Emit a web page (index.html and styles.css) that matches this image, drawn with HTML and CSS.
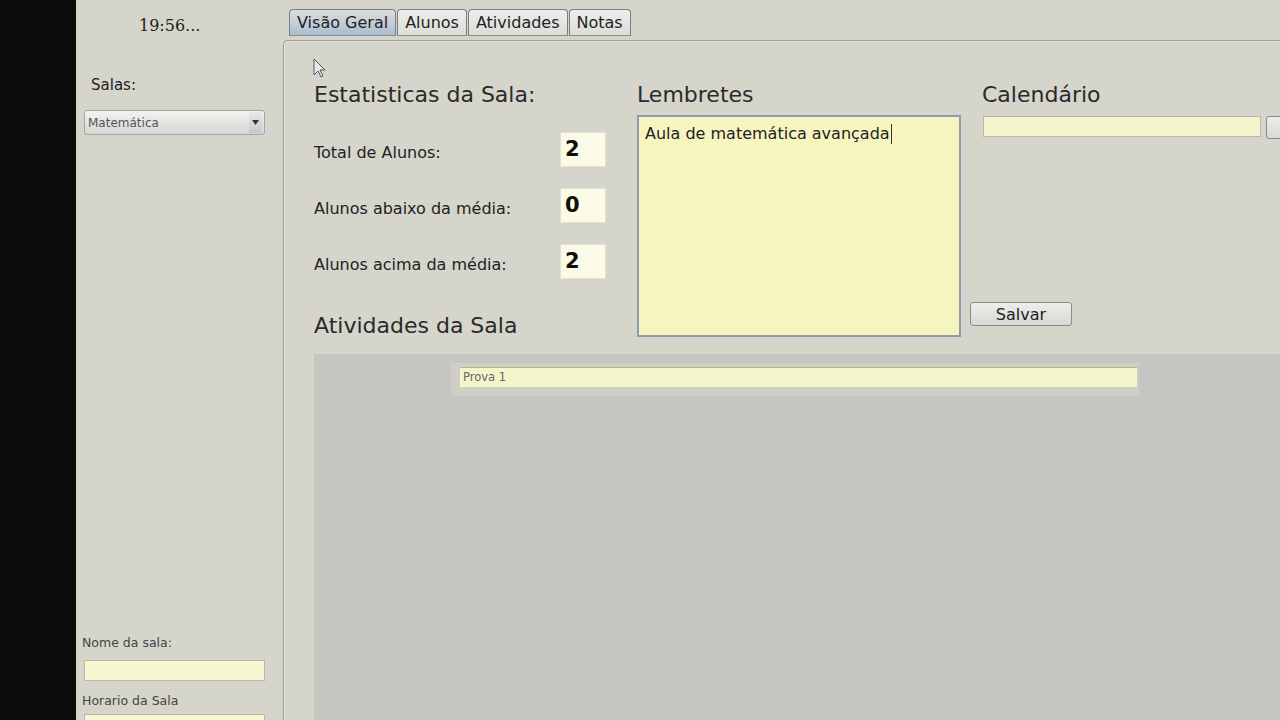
FILE: index.html
```html
<!DOCTYPE html>
<html lang="pt">
<head>
<meta charset="utf-8">
<title>Sala</title>
<link rel="stylesheet" href="styles.css">
</head>
<body>
<div class="blackbar"></div>
<aside class="sidebar">
  <div class="clock">19:56...</div>
  <div class="salas-label">Salas:</div>
  <div class="combo">
    <span class="combo-text">Matemática</span>
    <span class="combo-btn"><svg width="7" height="5" viewBox="0 0 7 5"><path d="M0 0h7L3.5 5z" fill="#333"/></svg></span>
  </div>
  <div class="field-label first">Nome da sala:</div>
  <div class="field-input"></div>
  <div class="field-label">Horario da Sala</div>
  <div class="field-input last"></div>
</aside>
<main class="main">
  <nav class="tabs">
    <div class="tab active">Visão Geral</div>
    <div class="tab">Alunos</div>
    <div class="tab">Atividades</div>
    <div class="tab">Notas</div>
  </nav>
  <section class="panel">
    <svg class="cursor" width="14" height="21" viewBox="0 0 14 21"><path d="M1 1v16l4-4 3 6 2-1-3-6h5z" fill="#e8e8ec" stroke="#555" stroke-width="1"/></svg>
    <div class="top">
      <div class="col stats-col">
        <h2 class="heading">Estatisticas da Sala:</h2>
        <div class="stats">
          <div class="stat-row"><span class="stat-label">Total de Alunos:</span><span class="stat-box">2</span></div>
          <div class="stat-row"><span class="stat-label">Alunos abaixo da média:</span><span class="stat-box">0</span></div>
          <div class="stat-row"><span class="stat-label">Alunos acima da média:</span><span class="stat-box">2</span></div>
        </div>
        <h2 class="heading activities-heading">Atividades da Sala</h2>
      </div>
      <div class="col notes-col">
        <h2 class="heading">Lembretes</h2>
        <div class="notes"><span class="notes-text">Aula de matemática avançada</span><span class="caret"></span></div>
      </div>
      <div class="col cal-col">
        <h2 class="heading cal-heading">Calendário</h2>
        <div class="cal-row">
          <div class="cal-input"></div>
          <div class="cal-btn"></div>
        </div>
        <button class="save">Salvar</button>
      </div>
    </div>
    <div class="activities">
      <div class="act-strip">
        <div class="act-input">Prova 1</div>
      </div>
    </div>
  </section>
</main>
</body>
</html>
```
FILE: styles.css
```css
html, body {
  margin: 0;
  padding: 0;
}
body {
  width: 1280px;
  height: 720px;
  overflow: hidden;
  display: flex;
  background: #d5d5cc;
  font-family: "DejaVu Sans", "Noto Sans", sans-serif;
  color: #222;
}
.blackbar {
  width: 76px;
  flex: none;
  background: #0b0b0b;
}
.sidebar {
  width: 201px;
  flex: none;
  display: flex;
  flex-direction: column;
  padding-left: 6px;
}
.clock {
  font-family: "DejaVu Serif", serif;
  font-size: 16px;
  line-height: 20px;
  padding-top: 16px;
  margin-left: 57px;
  color: #222;
}
.salas-label {
  font-size: 15px;
  line-height: 18px;
  margin-top: 40px;
  margin-left: 9px;
  color: #222;
}
.combo {
  margin-top: 16px;
  margin-left: 2px;
  width: 181px;
  height: 25px;
  box-sizing: border-box;
  border: 1px solid #a4a4a8;
  border-radius: 3px;
  background: linear-gradient(#f2f2f0, #d6d6d3);
  display: flex;
  align-items: center;
}
.combo-text {
  flex: 1;
  font-size: 12px;
  padding-top: 1px;
  color: #555;
  padding-left: 3px;
}
.combo-btn {
  width: 13px;
  height: 21px;
  margin-right: 2px;
  display: flex;
  align-items: center;
  justify-content: center;
  background: linear-gradient(#e8e8ea, #c8c8cc);
}
.field-label {
  font-size: 12.5px;
  line-height: 16px;
  color: #444;
  margin-top: 12px;
}
.field-label.first {
  margin-top: auto;
}
.field-input {
  margin-top: 9px;
  margin-left: 2px;
  width: 181px;
  height: 21px;
  box-sizing: border-box;
  border: 1px solid #b8b8a8;
  background: #f6f6d2;
}
.field-input.last {
  margin-top: 5px;
  margin-bottom: -15px;
}
.main {
  flex: 1;
  display: flex;
  flex-direction: column;
  min-width: 0;
}
.tabs {
  display: flex;
  padding-top: 9px;
  padding-left: 6px;
  height: 27px;
  gap: 1px;
}
.tab {
  height: 27px;
  box-sizing: border-box;
  padding: 0 7px;
  border: 1px solid #7c7c7c;
  border-bottom-color: #8a8a8a;
  border-radius: 4px 4px 0 0;
  background: linear-gradient(#ededeb, #dcdcd8);
  font-size: 16px;
  line-height: 25px;
  color: #222;
}
.tab.active {
  background: linear-gradient(#dadde0 0%, #c8d0d8 45%, #a8bdcf 100%);
}
.panel {
  position: relative;
  flex: 1;
  margin-top: 4px;
  border-top: 1px solid #9c9c9c;
  border-left: 1px solid #9c9c9c;
  border-top-left-radius: 5px;
  box-shadow: inset 1px 1px 0 #e4e4dc;
  display: flex;
  flex-direction: column;
  min-height: 0;
}
.cursor {
  position: absolute;
  left: 29px;
  top: 17px;
}
.top {
  display: flex;
  padding-top: 42px;
  padding-left: 30px;
}
.heading {
  margin: 0;
  font-size: 22px;
  font-weight: normal;
  line-height: 24px;
  color: #2a2a2a;
}
.col {
  display: flex;
  flex-direction: column;
}
.stats-col {
  width: 292px;
  margin-right: 31px;
}
.stats {
  margin-top: 25px;
  display: flex;
  flex-direction: column;
  gap: 21px;
}
.stat-row {
  display: flex;
  align-items: center;
  justify-content: space-between;
  height: 35px;
}
.stat-label {
  font-size: 16px;
  margin-top: 5px;
  color: #222;
}
.stat-box {
  width: 46px;
  height: 35px;
  box-sizing: border-box;
  border: 1px solid #e2e2d4;
  background: #fafae6;
  font-size: 21px;
  font-weight: bold;
  line-height: 33px;
  padding-left: 4px;
  color: #111;
}
.activities-heading {
  margin-top: 35px;
}
.notes-col {
  width: 324px;
}
.notes {
  margin-top: 8px;
  height: 222px;
  box-sizing: border-box;
  border: 2px solid #8e9cb3;
  background: #f6f5c0;
  padding: 6px 6px;
  font-size: 16px;
  line-height: 22px;
  color: #222;
  display: flex;
  align-items: flex-start;
}
.caret {
  width: 1px;
  height: 20px;
  margin-top: 1px;
  margin-left: 1px;
  background: #333;
}
.cal-col {
  flex: 1;
  margin-left: 9px;
  min-width: 0;
}
.cal-heading {
  padding-left: 12px;
}
.cal-row {
  display: flex;
  margin-top: 9px;
  padding-left: 13px;
  gap: 5px;
  align-items: flex-start;
}
.cal-input {
  width: 278px;
  height: 21px;
  flex: none;
  box-sizing: border-box;
  border: 1px solid #b8b8a8;
  background: #f4f4cc;
}
.cal-btn {
  width: 30px;
  height: 23px;
  flex: none;
  box-sizing: border-box;
  border: 1px solid #8a8a8a;
  border-radius: 3px;
  background: linear-gradient(#ececea, #d8d8d4);
}
.save {
  margin-top: auto;
  margin-bottom: 12px;
  width: 102px;
  height: 24px;
  border: 1px solid #8a8a8a;
  border-radius: 3px;
  background: linear-gradient(#ededeb, #d8d8d4);
  font-family: "DejaVu Sans", sans-serif;
  font-size: 16px;
  color: #222;
  padding: 0;
}
.activities {
  flex: 1;
  margin-top: 16px;
  margin-left: 30px;
  background: #c5c5c2;
}
.act-strip {
  margin-top: 9px;
  margin-left: 137px;
  width: 688px;
  height: 33px;
  box-sizing: border-box;
  padding: 4px 2px 9px 9px;
  background: #cfcfc6;
}
.act-input {
  height: 20px;
  box-sizing: border-box;
  border-top: 1px solid #b4b48c;
  background: #f5f5cc;
  font-size: 11.5px;
  line-height: 19px;
  padding-left: 3px;
  color: #666;
}
```
